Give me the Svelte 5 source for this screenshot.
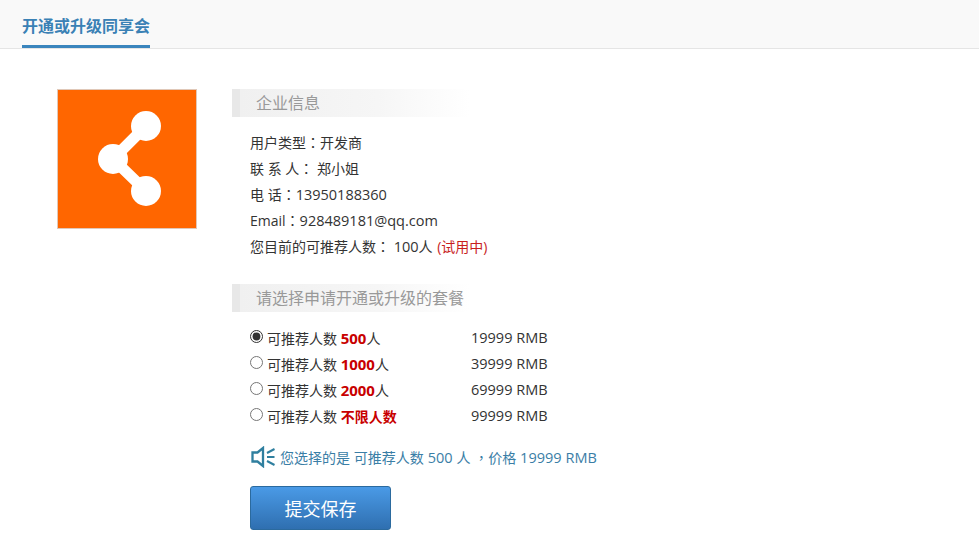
<script lang="ts">
  const info = [
    { label: "用户类型", gap: "", value: "开发商", latin: false },
    { label: "联 系 人", gap: " ", value: "郑小姐", latin: false },
    { label: "电 话", gap: "", value: "13950188360", latin: true },
    { label: "Email", gap: "", value: "928489181@qq.com", latin: true },
  ];

  const plans = [
    { amount: "500", unit: "人", price: "19999 RMB", latin: true },
    { amount: "1000", unit: "人", price: "39999 RMB", latin: true },
    { amount: "2000", unit: "人", price: "69999 RMB", latin: true },
    { amount: "不限人数", unit: "", price: "99999 RMB", latin: false },
  ];

  let selected = $state(0);
</script>

<header class="tabs">
  <div class="tab">开通或升级同享会</div>
</header>

<main class="page">
  <div class="logo">
    <svg width="138" height="138" viewBox="0 0 138 138" aria-hidden="true">
      <path d="M55 69 L88 36 M55 69 L88 101" stroke="#fff" stroke-width="11" fill="none" />
      <circle cx="88" cy="36" r="15" fill="#fff" />
      <circle cx="55" cy="69" r="15" fill="#fff" />
      <circle cx="88" cy="101" r="15" fill="#fff" />
    </svg>
  </div>

  <div class="content">
    <h2 class="section-title">企业信息</h2>
    <ul class="info">
      {#each info as row}
        <li>{row.label}<span class="punct">：</span>{row.gap}<span class:latin={row.latin}>{row.value}</span></li>
      {/each}
      <li>您目前的可推荐人数<span class="punct">：</span> <span class="latin">100</span>人 <span class="trial">(试用中)</span></li>
    </ul>

    <h2 class="section-title">请选择申请开通或升级的套餐</h2>
    <div class="plans">
      {#each plans as plan, i}
        <label class="plan">
          <input type="radio" name="plan" checked={selected === i} onchange={() => (selected = i)} />
          <span class="plan-name">可推荐人数 <b class:latin={plan.latin}>{plan.amount}</b>{plan.unit}</span>
          <span class="latin">{plan.price}</span>
        </label>
      {/each}
    </div>

    <div class="notice">
      <svg width="25" height="22" viewBox="0 0 25 22" aria-hidden="true">
        <path d="M1.5 6.5 H6.5 L12 2 V20 L6.5 15.5 H1.5 Z" fill="none" stroke="#2f7f9f" stroke-width="2.3" stroke-linejoin="miter" />
        <path d="M16 7 L23.5 3 M16 11 H23.5 M16 15 L23.5 19" fill="none" stroke="#2f7f9f" stroke-width="2" />
      </svg>
      <span>您选择的是 可推荐人数 <span class="latin">500</span> 人 <span class="punct">，</span>价格 <span class="latin">19999 RMB</span></span>
    </div>

    <button class="submit" type="button">提交保存</button>
  </div>
</main>

<style>
  :global(body) {
    background: #fff;
    font-family: "Open Sans", "Noto Sans CJK SC", sans-serif;
    color: #333;
  }

  .tabs {
    height: 48px;
    padding-left: 22px;
    background: #f9f9f9;
    border-bottom: 1px solid #e5e5e5;
  }

  .tab {
    display: inline-block;
    box-sizing: border-box;
    height: 48px;
    line-height: 53px;
    font-size: 16px;
    font-weight: 700;
    color: #3a81b5;
    border-bottom: 3px solid #3a85bd;
  }

  .page {
    display: flex;
    gap: 35px;
    padding: 40px 0 0 57px;
  }

  .logo {
    width: 138px;
    height: 138px;
    flex-shrink: 0;
    background: #ff6600;
    border: 1px solid #e0c8b8;
  }

  .logo svg {
    display: block;
  }

  .content {
    flex: 1;
  }

  .section-title {
    width: 238px;
    height: 28px;
    box-sizing: border-box;
    margin: 0;
    padding-left: 16px;
    line-height: 28px;
    font-size: 16px;
    font-weight: 400;
    color: #999;
    border-left: 8px solid #e8e8e8;
    background: linear-gradient(to right, #f0f0f0, #f6f6f6 60%, #fff);
  }

  .info + .section-title {
    margin-top: 24px;
  }

  .latin {
    font-size: 14.5px;
    line-height: 1;
  }

  .punct {
    font-family: "Noto Sans CJK TC", sans-serif;
    line-height: 1;
  }

  .info {
    list-style: none;
    margin: 13px 0 0;
    padding: 0 0 0 18px;
    font-size: 14px;
    line-height: 26px;
  }

  .info li {
    height: 26px;
  }

  .trial {
    margin-left: 1px;
    font-size: 14px;
    color: #c81e1e;
  }

  .plans {
    margin-top: 13px;
    padding-left: 18px;
  }

  .plan {
    display: flex;
    align-items: center;
    height: 26px;
    font-size: 14px;
  }

  .plan input {
    width: 13px;
    height: 13px;
    margin: 0 4px 3px 0;
    accent-color: #333;
  }

  .plan-name {
    width: 204px;
  }

  .plan-name b {
    color: #c80000;
  }

  .plan-name b.latin {
    font-size: 15px;
  }

  .notice {
    display: flex;
    align-items: center;
    gap: 4px;
    margin-top: 15px;
    padding-left: 19px;
    height: 26px;
    font-size: 14px;
    word-spacing: 0.2px;
    color: #3a7ea6;
  }

  .submit {
    display: block;
    width: 141px;
    height: 44px;
    margin: 16px 0 0 18px;
    padding: 0;
    font-family: inherit;
    font-size: 18px;
    color: #fff;
    border: 1px solid #2b6a9e;
    border-radius: 3px;
    background: linear-gradient(to bottom, #4a9ae6, #2f6fb0);
  }
</style>
